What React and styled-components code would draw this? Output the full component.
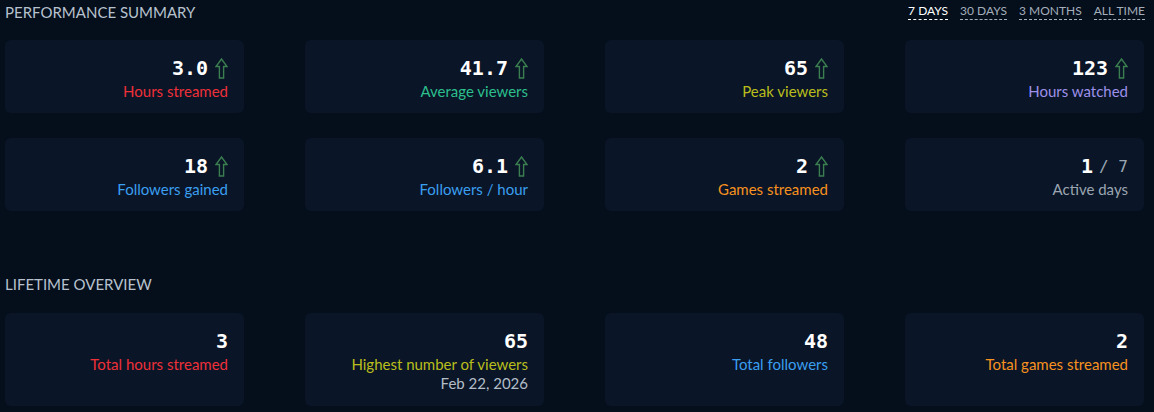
import React from 'react';
import styled, { createGlobalStyle } from 'styled-components';

const GlobalStyle = createGlobalStyle`
  body {
    margin: 0;
    background: #050e1b;
    font-family: Lato, "Noto Sans", sans-serif;
  }
`;

const Page = styled.div`
  padding: 0 9px 0 5px;
  width: 1154px;
  box-sizing: border-box;
`;

const Header = styled.div`
  display: flex;
  justify-content: space-between;
  align-items: center;
  height: 24px;
  margin-top: ${({ top }) => top || 0}px;
`;

const Title = styled.h2`
  margin: 0;
  font-size: 15px;
  font-weight: 400;
  color: #b7c2ce;
`;

const Ranges = styled.div`
  display: flex;
  gap: 12px;
  align-items: center;
`;

const Range = styled.span`
  font-size: 12px;
  color: ${({ active }) => (active ? '#ffffff' : '#a3aeba')};
  border-bottom: 1px dashed ${({ active }) => (active ? '#ffffff' : '#a3aeba')};
  padding-bottom: 1px;
  line-height: 14px;
  cursor: pointer;
`;

const Grid = styled.div`
  display: grid;
  grid-template-columns: repeat(4, 239px);
  column-gap: 61px;
  row-gap: 25px;
  margin-top: ${({ top }) => top}px;
`;

const Card = styled.div`
  background: #0a1527;
  border-radius: 6px;
  padding: 16px 16px 13px;
  min-height: ${({ tall }) => (tall ? 64 : 44)}px;
  display: flex;
  flex-direction: column;
  align-items: flex-end;
`;

const Value = styled.div`
  display: flex;
  align-items: center;
  height: 24px;
  font-family: "DejaVu Sans Mono", monospace;
  font-weight: 700;
  font-size: 20px;
  color: #ffffff;
`;

const Of = styled.span`
  font-weight: 400;
  font-size: 16px;
  color: #9aa5b1;
  margin-left: 6px;
`;

const Label = styled.div`
  margin-top: 2px;
  font-size: 15px;
  line-height: 18px;
  color: ${({ color }) => color};
`;

const Sub = styled.div`
  font-size: 15px;
  line-height: 20px;
  color: #b3bdc8;
`;

const ArrowSvg = styled.svg`
  margin-left: 7px;
`;

const Arrow = () => (
  <ArrowSvg width="13" height="21" viewBox="0 0 13 21">
    <path
      d="M6.5 1 L12 8.5 L8.6 8.5 L8.6 20 L4.4 20 L4.4 8.5 L1 8.5 Z"
      fill="none"
      stroke="#3b7f50"
      strokeWidth="1.4"
      strokeLinejoin="miter"
    />
  </ArrowSvg>
);

const RED = '#ee3039';
const TEAL = '#2cbf8d';
const YELLOW = '#b9bd1c';
const PURPLE = '#9d90ea';
const BLUE = '#3a9ff0';
const ORANGE = '#f7911f';
const GREY = '#9aa5b1';

const summary = [
  { value: '3.0', label: 'Hours streamed', color: RED, up: true },
  { value: '41.7', label: 'Average viewers', color: TEAL, up: true },
  { value: '65', label: 'Peak viewers', color: YELLOW, up: true },
  { value: '123', label: 'Hours watched', color: PURPLE, up: true },
  { value: '18', label: 'Followers gained', color: BLUE, up: true },
  { value: '6.1', label: 'Followers / hour', color: BLUE, up: true },
  { value: '2', label: 'Games streamed', color: ORANGE, up: true },
  { value: '1', of: '/ 7', label: 'Active days', color: GREY },
];

const lifetime = [
  { value: '3', label: 'Total hours streamed', color: RED },
  { value: '65', label: 'Highest number of viewers', color: YELLOW, sub: 'Feb 22, 2026' },
  { value: '48', label: 'Total followers', color: BLUE },
  { value: '2', label: 'Total games streamed', color: ORANGE },
];

const StatCard = ({ item, tall }) => (
  <Card tall={tall}>
    <Value>
      {item.value}
      {item.of && <Of>{item.of}</Of>}
      {item.up && <Arrow />}
    </Value>
    <Label color={item.color}>{item.label}</Label>
    {item.sub && <Sub>{item.sub}</Sub>}
  </Card>
);

export default function App() {
  return (
    <>
      <GlobalStyle />
      <Page>
        <Header>
          <Title>PERFORMANCE SUMMARY</Title>
          <Ranges>
            <Range active>7 DAYS</Range>
            <Range>30 DAYS</Range>
            <Range>3 MONTHS</Range>
            <Range>ALL TIME</Range>
          </Ranges>
        </Header>
        <Grid top={16}>
          {summary.map((s) => (
            <StatCard key={s.label} item={s} />
          ))}
        </Grid>
        <Header top={61}>
          <Title>LIFETIME OVERVIEW</Title>
        </Header>
        <Grid top={17}>
          {lifetime.map((s) => (
            <StatCard key={s.label} item={s} tall />
          ))}
        </Grid>
      </Page>
    </>
  );
}
